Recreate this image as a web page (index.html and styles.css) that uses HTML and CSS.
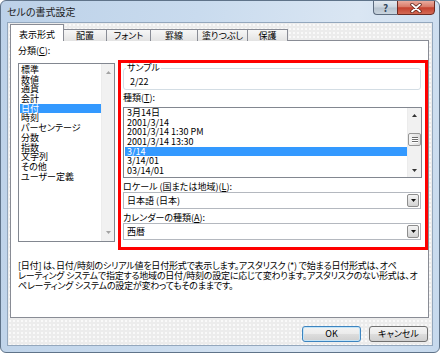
FILE: index.html
```html
<!DOCTYPE html>
<html lang="ja">
<head>
<meta charset="utf-8">
<title>セルの書式設定</title>
<link rel="stylesheet" href="styles.css">
</head>
<body>
<div class="window">
  <div class="titlebar">
    <span class="title">セルの書式設定</span>
    <div class="caption-buttons">
      <span class="cap-btn help">?</span>
      <span class="cap-btn close">
        <svg width="12" height="10" viewBox="0 0 12 10"><path d="M2 1.5 L10 8.5 M10 1.5 L2 8.5" stroke="#5b2119" stroke-width="3.4" stroke-linecap="round"/><path d="M2 1.5 L10 8.5 M10 1.5 L2 8.5" stroke="#ffffff" stroke-width="1.8" stroke-linecap="round"/></svg>
      </span>
    </div>
  </div>
  <div class="client">
    <div class="tabs">
      <div class="tab active">表示形式</div>
      <div class="tab">配置</div>
      <div class="tab">フォント</div>
      <div class="tab">罫線</div>
      <div class="tab">塗りつぶし</div>
      <div class="tab">保護</div>
    </div>
    <div class="panel">
      <div class="columns">
        <div class="col-left">
          <div class="label">分類(<u>C</u>):</div>
          <div class="listbox cat-list">
            <ul class="items">
              <li>標準</li>
              <li>数値</li>
              <li>通貨</li>
              <li>会計</li>
              <li class="sel">日付</li>
              <li>時刻</li>
              <li>パーセンテージ</li>
              <li>分数</li>
              <li>指数</li>
              <li>文字列</li>
              <li>その他</li>
              <li>ユーザー定義</li>
            </ul>
            <div class="scrollbar disabled">
              <div class="sb-btn"><svg width="5" height="3" viewBox="0 0 5 3"><path d="M0 3 L2.5 0 L5 3 Z"/></svg></div>
              <div class="sb-fill"></div>
              <div class="sb-btn"><svg width="5" height="3" viewBox="0 0 5 3"><path d="M0 0 L2.5 3 L5 0 Z"/></svg></div>
            </div>
          </div>
        </div>
        <div class="col-right">
          <fieldset class="sample">
            <legend>サンプル</legend>
            <div class="sample-value">2/22</div>
          </fieldset>
          <div class="label gap-label">種類(<u>T</u>):</div>
          <div class="listbox type-list">
            <ul class="items">
              <li>3月14日</li>
              <li>2001/3/14</li>
              <li>2001/3/14 1:30 PM</li>
              <li>2001/3/14 13:30</li>
              <li class="sel">3/14</li>
              <li>3/14/01</li>
              <li>03/14/01</li>
            </ul>
            <div class="scrollbar">
              <div class="sb-btn"><svg width="5" height="3" viewBox="0 0 5 3"><path d="M0 3 L2.5 0 L5 3 Z"/></svg></div>
              <div class="thumb"><span></span><span></span><span></span></div>
              <div class="sb-fill"></div>
              <div class="sb-btn"><svg width="5" height="3" viewBox="0 0 5 3"><path d="M0 0 L2.5 3 L5 0 Z"/></svg></div>
            </div>
          </div>
          <div class="label gap-label-l">ロケール (国または地域)(<u>L</u>):</div>
          <div class="combo">
            <span class="combo-text">日本語 (日本)</span>
            <span class="drop-btn"><svg width="5" height="3" viewBox="0 0 5 3"><path d="M0 0 L2.5 3 L5 0 Z"/></svg></span>
          </div>
          <div class="label gap-label-l">カレンダーの種類(<u>A</u>):</div>
          <div class="combo">
            <span class="combo-text">西暦</span>
            <span class="drop-btn"><svg width="5" height="3" viewBox="0 0 5 3"><path d="M0 0 L2.5 3 L5 0 Z"/></svg></span>
          </div>
        </div>
      </div>
      <p class="desc">
        <span>[日付] は、日付/時刻のシリアル値を日付形式で表示します。アスタリスク (*) で始まる日付形式は、オペ</span>
        <span>レーティング システムで指定する地域の日付/時刻の設定に応じて変わります。アスタリスクのない形式は、オ</span>
        <span>ペレーティング システムの設定が変わってもそのままです。</span>
      </p>
    </div>
    <div class="buttons">
      <button class="btn default">OK</button>
      <button class="btn">キャンセル</button>
    </div>
  </div>
</div>
</body>
</html>
```

FILE: styles.css
```css
* { box-sizing: border-box; }
html, body { margin: 0; padding: 0; }
body {
  width: 440px;
  height: 353px;
  overflow: hidden;
  background: #ffffff;
  font-family: "Noto Sans CJK JP", "Noto Sans", sans-serif;
  font-size: 9px;
  color: #000;
  font-feature-settings: "palt";
}

.window {
  width: 440px;
  height: 353px;
  border: 1px solid #5f7389;
  border-radius: 6px;
  background: linear-gradient(100deg, #bcd1e8 0%, #c9dbee 40%, #dae6f3 72%, #c6d9ed 100%);
  display: flex;
  flex-direction: column;
  overflow: hidden;
}

.titlebar {
  height: 21px;
  flex-shrink: 0;
  display: flex;
  align-items: flex-start;
}
.title {
  flex: 1;
  font-size: 10px;
  line-height: 21px;
  padding-left: 6px;
  color: #1b1b1b;
}
.caption-buttons {
  display: flex;
  margin-top: -1px;
  margin-right: 4px;
}
.cap-btn {
  height: 15px;
  display: flex;
  align-items: center;
  justify-content: center;
  border: 1px solid #5c6b7e;
}
.help {
  width: 24px;
  border-right: none;
  border-radius: 0 0 0 4px;
  background: linear-gradient(#e3e9f0 0%, #cbd5df 48%, #b6c2ce 52%, #c9d4de 100%);
  color: #34475c;
  font-size: 10px;
  font-weight: bold;
  line-height: 13px;
}
.close {
  width: 38px;
  border-radius: 0 0 4px 0;
  border-color: #6e2b22;
  background: linear-gradient(#eaab9e 0%, #d97a68 45%, #c4412e 52%, #d36a55 100%);
}

.client {
  flex: 1;
  margin: 0 6px 6px 6px;
  border: 1px solid #93a7bd;
  background-color: #ececec;
  background-image: radial-gradient(circle, rgba(255,255,255,0.95) 0.6px, transparent 1px);
  background-size: 4px 4px;
  padding: 1px 3px 3px 2px;
  display: flex;
  flex-direction: column;
}

.tabs {
  display: flex;
  align-items: flex-end;
  height: 17px;
  flex-shrink: 0;
  position: relative;
  z-index: 1;
}
.tab {
  height: 12px;
  border: 1px solid #898c95;
  border-bottom: none;
  margin-left: -1px;
  background: linear-gradient(#f7f7f7, #e3e3e3);
  text-align: center;
  line-height: 11px;
  white-space: nowrap;
}
.tab:first-child { margin-left: 0; }
.tab:nth-child(1) { width: 54px; }
.tab:nth-child(2) { width: 44px; }
.tab:nth-child(3) { width: 45px; }
.tab:nth-child(4) { width: 48px; }
.tab:nth-child(5) { width: 51px; }
.tab:nth-child(6) { width: 41px; }
.tab.active {
  height: 17px;
  background: #ffffff;
  padding-top: 5px;
  line-height: 10px;
  position: relative;
  z-index: 2;
}

.panel {
  flex: 1;
  margin-top: -1px;
  border: 1px solid #898c95;
  background: #ffffff;
  display: flex;
  flex-direction: column;
}

.columns {
  display: grid;
  grid-template-columns: 97px 1fr;
  column-gap: 3px;
  padding-left: 7px;
}

.label { line-height: 10px; white-space: nowrap; }
.label u { text-decoration-thickness: 1px; text-underline-offset: 1px; }

.col-left {
  display: flex;
  flex-direction: column;
  padding-top: 5px;
}

.listbox {
  border: 1px solid #828790;
  background: #ffffff;
  display: flex;
}
.items {
  flex: 1;
  list-style: none;
  margin: 0;
  padding: 0;
}
.items li {
  height: 9.7px;
  line-height: 9.7px;
  white-space: nowrap;
}
.items li.sel {
  background: #3399ff;
  color: #ffffff;
}

.cat-list {
  flex: 1;
  margin-top: 7px;
  margin-bottom: 8px;
}
.cat-list .items { padding: 1px 0 0 1px; }
.cat-list .items li { padding-left: 1px; }
.cat-list .scrollbar { width: 13px; }
.cat-list .sb-btn { height: 17px; }

.type-list {
  height: 71px;
  margin-top: 4px;
}
.type-list .items { padding: 0 0 0 1px; }
.type-list .items li { padding-left: 2px; }

.scrollbar {
  width: 14px;
  background: #f1f1f1;
  border-left: 1px solid #ececec;
  display: flex;
  flex-direction: column;
}
.sb-btn {
  height: 14px;
  display: flex;
  align-items: center;
  justify-content: center;
  fill: #333333;
}
.scrollbar.disabled .sb-btn { fill: #a3a3a3; }
.sb-fill { flex: 1; }
.thumb {
  height: 13px;
  margin: 11px 0 0 0;
  border: 1px solid #979797;
  border-radius: 2px;
  background: linear-gradient(to right, #f5f5f5, #dcdcdc);
  display: flex;
  flex-direction: column;
  align-items: center;
  justify-content: center;
  gap: 1px;
}
.thumb span {
  width: 6px;
  height: 1px;
  background: #6b6b6b;
  box-shadow: 0 1px 0 #ffffff;
}

.col-right {
  margin-top: 19px;
  border: 3px solid #ff0000;
  padding: 0 3px 7px 2px;
}

.sample {
  margin: 0 1px 0 0;
  border: 1px solid #d3dde4;
  border-radius: 3px;
  padding: 4px 6px 2px 6px;
  min-width: 0;
}
.sample legend {
  padding: 0 1px;
  margin-left: -4px;
  line-height: 10px;
}
.sample-value { line-height: 10px; }

.gap-label { margin-top: 3px; }
.gap-label-l { margin-top: 4px; }

.combo {
  height: 17px;
  margin-right: 1px;
  border: 1px solid #b4b8bf;
  background: #ffffff;
  display: flex;
  align-items: flex-start;
}
.combo-text {
  flex: 1;
  line-height: 15px;
  padding-left: 3px;
  white-space: nowrap;
}
.drop-btn {
  width: 12px;
  height: 13px;
  margin: 1px 1px 0 0;
  border: 1px solid #8d8d8d;
  border-radius: 2px;
  background: linear-gradient(#f4f4f4, #d3d3d3);
  display: flex;
  align-items: center;
  justify-content: center;
  fill: #111111;
}

.desc {
  margin: 11px 0 0 7px;
  line-height: 10px;
  letter-spacing: -0.22px;
}
.desc span {
  display: block;
  white-space: nowrap;
}

.buttons {
  display: flex;
  justify-content: flex-end;
  gap: 8px;
  margin-top: 8px;
  margin-right: 1px;
  flex-shrink: 0;
}
.btn {
  width: 59px;
  height: 16px;
  padding: 0;
  border: 1px solid #707070;
  border-radius: 3px;
  background: linear-gradient(#f3f3f3 0%, #ebebeb 48%, #dddddd 52%, #cfcfcf 100%);
  font-family: inherit;
  font-size: 9px;
  line-height: 14px;
  color: #000;
  font-feature-settings: "palt";
}
.btn.default {
  border-color: #3d84bf;
  box-shadow: inset 0 0 0 1px #c4e4f7;
}
```
